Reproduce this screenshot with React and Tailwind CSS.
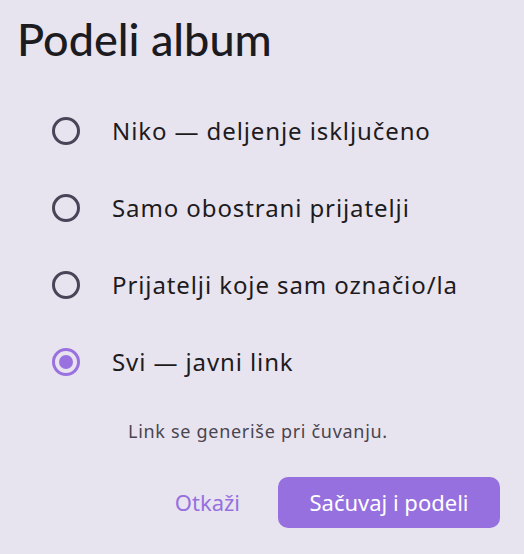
const options = [
  { label: "Niko — deljenje isključeno", checked: false },
  { label: "Samo obostrani prijatelji", checked: false },
  { label: "Prijatelji koje sam označio/la", checked: false },
  { label: "Svi — javni link", checked: true },
]

const Radio = ({ checked }) => (
  <span
    className={
      "flex h-[28px] w-[28px] shrink-0 items-center justify-center rounded-full border-[3px] " +
      (checked ? "border-[#9a72e0]" : "border-[#4a4458]")
    }
  >
    {checked && <span className="h-[14px] w-[14px] rounded-full bg-[#9a72e0]" />}
  </span>
)

export default function App() {
  return (
    <div className="flex h-[554px] w-[524px] flex-col bg-[#e8e4ef] font-['Noto_Sans',sans-serif]">
      {/* Title */}
      <h1 className="pl-[17px] pt-[12px] font-['Lato',sans-serif] text-[45px] leading-[54px] font-medium text-[#1c1b1f]">
        Podeli album
      </h1>

      {/* Options */}
      <div className="mt-[26px] flex flex-col">
        {options.map((o) => (
          <label key={o.label} className="flex h-[77px] items-center gap-[32px] pl-[52px]">
            <Radio checked={o.checked} />
            <span className="text-[24px] tracking-[0.9px] text-[#1d1b20]">{o.label}</span>
          </label>
        ))}
      </div>

      {/* Helper */}
      <p className="mt-[18px] pl-[128px] text-[18px] tracking-[0.7px] text-[#49454f]">
        Link se generiše pri čuvanju.
      </p>

      {/* Actions */}
      <div className="mt-[32px] flex items-center justify-end gap-[38px] pr-[24px]">
        <button className="text-[22px] text-[#9670df]">Otkaži</button>
        <button className="h-[51px] w-[222px] rounded-[10px] bg-[#9670df] text-[22px] text-white">
          Sačuvaj i podeli
        </button>
      </div>
    </div>
  )
}
